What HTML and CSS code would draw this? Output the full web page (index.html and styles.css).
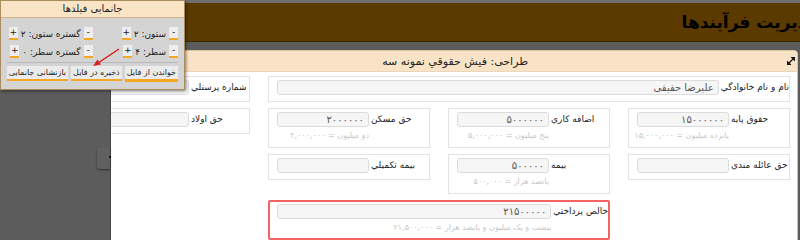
FILE: index.html
```html
<!DOCTYPE html>
<html lang="fa" dir="rtl">
<head>
  <meta charset="UTF-8">
  <title>مديريت فرآيندها</title>
  <link rel="stylesheet" href="styles.css">
</head>
<body>

  <div class="appbar"><span class="app-title">مديريت فرآيندها</span></div>

  <div class="panel">
    <div class="panel-head">
      <svg class="expand" width="10" height="10" viewBox="0 0 10 10">
        <path d="M3 7 L7 3" stroke="#111" stroke-width="1.3"/>
        <path d="M1 9 L1 4.5 L5.5 9 Z" fill="#111"/>
        <path d="M9 1 L9 5.5 L4.5 1 Z" fill="#111"/>
      </svg>
      <span class="panel-title">طراحی: فيش حقوقي نمونه سه</span>
    </div>

    <div class="grid">
      <div class="field wide">
        <label>نام و نام خانوادگي</label>
        <div class="val"><input type="text" value="عليرضا حقيقي"></div>
      </div>
      <div class="field">
        <label>شماره پرسنلي</label>
        <div class="val"><input type="text" value=""></div>
      </div>

      <div class="field">
        <label>حقوق پایه</label>
        <div class="val">
          <input type="text" value="۱۵۰۰۰۰۰۰">
          <div class="hint">پانزده میلیون = ۱۵,۰۰۰,۰۰۰</div>
        </div>
      </div>
      <div class="field">
        <label>اضافه کاري</label>
        <div class="val">
          <input type="text" value="۵۰۰۰۰۰۰">
          <div class="hint">پنج میلیون = ۵,۰۰۰,۰۰۰</div>
        </div>
      </div>
      <div class="field">
        <label>حق مسکن</label>
        <div class="val">
          <input type="text" value="۲۰۰۰۰۰۰">
          <div class="hint">دو میلیون = ۲,۰۰۰,۰۰۰</div>
        </div>
      </div>
      <div class="field">
        <label>حق اولاد</label>
        <div class="val"><input type="text" value=""></div>
      </div>

      <div class="field">
        <label>حق عائله مندي</label>
        <div class="val"><input type="text" value=""></div>
      </div>
      <div class="field">
        <label>بیمه</label>
        <div class="val">
          <input type="text" value="۵۰۰۰۰۰">
          <div class="hint">پانصد هزار = ۵۰۰,۰۰۰</div>
        </div>
      </div>
      <div class="field">
        <label>بیمه تکمیلي</label>
        <div class="val"><input type="text" value=""></div>
      </div>

      <div class="field total">
        <label>خالص پرداختي</label>
        <div class="val">
          <input type="text" value="۲۱۵۰۰۰۰۰">
          <div class="hint">بیست و یک میلیون و پانصد هزار = ۲۱,۵۰۰,۰۰۰</div>
        </div>
      </div>
    </div>
  </div>

  <div class="drawer"><div class="handle"></div></div>

  <div class="layout-box">
    <div class="lb-head">جانمایی فیلدها</div>
    <div class="lb-body">
      <div class="lb-grid">
        <div class="stepper"><span class="sbtn">-</span><span class="slabel">ستون: ۲</span><span class="sbtn">+</span></div>
        <div class="stepper"><span class="sbtn">-</span><span class="slabel">گستره ستون: ۲</span><span class="sbtn">+</span></div>
        <div class="stepper"><span class="sbtn">-</span><span class="slabel">سطر: ۴</span><span class="sbtn">+</span></div>
        <div class="stepper"><span class="sbtn">-</span><span class="slabel">گستره سطر: ۰</span><span class="sbtn">+</span></div>
      </div>
      <div class="lb-actions">
        <span class="lbtn active">خواندن از فایل</span>
        <span class="lbtn">ذخیره در فایل</span>
        <span class="lbtn">بازنشانی جانمایی</span>
      </div>
    </div>
  </div>

  <svg class="arrow" width="40" height="30" viewBox="0 0 40 30">
    <path d="M29 1 L8 15" stroke="#d42020" stroke-width="1.5"/>
    <path d="M3 18 L7.5 11.5 L11 16.5 Z" fill="#d42020"/>
  </svg>

</body>
</html>
```

FILE: styles.css
```css
body {
  margin: 0;
  padding-top: 3px;
  background: #5c5c5c;
  font-family: "DejaVu Sans", sans-serif;
  font-size: 10px;
  color: #222;
  overflow: hidden;
  height: 240px;
  box-shadow: inset 0 3px 0 #6e6e6e;
}

.appbar {
  height: 38px;
  background: #5b3a00;
  border-bottom: 1px solid #3a2600;
  overflow: hidden;
  white-space: nowrap;
}
.app-title {
  display: inline-block;
  margin-right: -18px;
  line-height: 38px;
  font-size: 17px;
  font-weight: bold;
  color: #000;
}

.panel {
  margin: 8px 2px 0 80px;
  background: #fff;
  border: 1px solid #d8c2a0;
  border-radius: 4px 4px 0 0;
}
.panel-head {
  display: flex;
  align-items: center;
  height: 20px;
  background: #f9e3c6;
  border-bottom: 1px solid #ead6bb;
  border-radius: 4px 4px 0 0;
}
.expand {
  flex-shrink: 0;
  margin-right: 1px;
}
.panel-title {
  flex: 1;
  text-align: right;
  padding-right: 258px;
  font-size: 11px;
}

.grid {
  display: grid;
  grid-template-columns: repeat(4, 162px);
  gap: 6px 18px;
  align-items: start;
  padding: 4px 7px 10px 7px;
}
.field {
  display: flex;
  gap: 2px;
  align-items: flex-start;
  min-width: 0;
  padding: 3px 0 6px 8px;
  border: 1px solid #e3e3e3;
}
.field.wide {
  grid-column: span 3;
}
.field.total {
  grid-column: 2 / span 2;
  border: 2px solid #f26464;
  padding: 2px 0 5px 7px;
  border-radius: 2px;
}
.field label {
  flex-shrink: 0;
  min-width: 58px;
  line-height: 15px;
  font-size: 9px;
  text-align: left;
  white-space: nowrap;
}
.field.total label {
  min-width: 52px;
}
.val {
  flex: 1;
  min-width: 0;
  display: flex;
  flex-direction: column;
}
.val input {
  width: 100%;
  min-width: 0;
  height: 15px;
  box-sizing: border-box;
  margin: 0;
  padding: 0 4px;
  border: 1px solid #dcdcdc;
  border-radius: 3px;
  background: #f6f6f6;
  font-family: "DejaVu Sans", sans-serif;
  font-size: 10px;
  color: #555;
  text-align: right;
}
.hint {
  margin-top: 4px;
  line-height: 10px;
  font-size: 8px;
  color: #c8c8c8;
  white-space: nowrap;
}

.drawer {
  position: absolute;
  left: 0;
  top: 42px;
  width: 110px;
  height: 198px;
  background: #5c5c5c;
  border-right: 1px solid #474747;
}
.handle {
  position: absolute;
  right: 0;
  top: 105px;
  width: 13px;
  height: 22px;
  background: #606060;
  border-radius: 3px 0 0 3px;
  box-shadow: 0 1px 2px rgba(0,0,0,0.5);
}
.handle::after {
  content: "";
  position: absolute;
  right: -1px;
  top: 9px;
  width: 2px;
  height: 2px;
  background: #111;
}

.layout-box {
  position: absolute;
  left: 0;
  top: 0;
  width: 185px;
  box-sizing: border-box;
  background: #d4d4d4;
  border: 1px solid #a88c5e;
  box-shadow: 1px 1px 3px rgba(0,0,0,0.5);
  white-space: nowrap;
}
.lb-head {
  height: 16px;
  line-height: 16px;
  text-align: center;
  background: #fae4c6;
  border-bottom: 1px solid #cdb28a;
}
.lb-body {
  padding: 9px 6px 7px 6px;
}
.lb-grid {
  display: grid;
  grid-template-columns: 1fr 1fr;
  row-gap: 5px;
}
.stepper {
  display: flex;
  align-items: center;
  gap: 3px;
}
.sbtn {
  width: 9px;
  height: 11px;
  line-height: 11px;
  text-align: center;
  background: #eeeeee;
  border-bottom: 2px solid #f5a623;
  font-size: 9px;
}
.slabel {
  font-size: 9px;
}
.lb-actions {
  display: flex;
  gap: 3px;
  margin-top: 4px;
  padding-top: 3px;
  border-top: 1px solid #b8b8b8;
}
.lbtn {
  height: 13px;
  line-height: 13px;
  padding: 0 2px;
  background: #ebebeb;
  border-bottom: 2px solid #f5a623;
  font-size: 8px;
}
.lbtn.active {
  border-bottom-width: 3px;
}

.arrow {
  position: absolute;
  left: 90px;
  top: 48px;
}
```
